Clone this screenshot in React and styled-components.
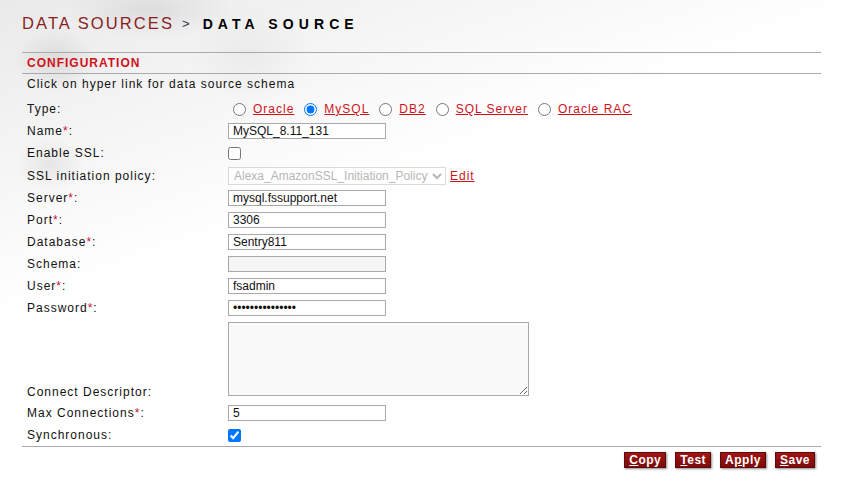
import React from "react";
import styled, { createGlobalStyle } from "styled-components";

const GlobalStyle = createGlobalStyle`
  html, body {
    margin: 0;
    padding: 0;
    background: #ffffff;
  }
  body {
    font-family: "Liberation Sans", Arial, sans-serif;
    color: #111;
  }
`;

// faint grey artwork behind the header
const Page = styled.div`
  width: 847px;
  min-height: 489px;
  box-sizing: border-box;
  padding: 0 26px 0 22px;
  background:
    radial-gradient(ellipse 50px 40px at 50px 165px, rgba(200, 200, 200, 0.35), rgba(255, 255, 255, 0) 70%),
    radial-gradient(ellipse 60px 45px at 55px 60px, rgba(190, 190, 190, 0.4), rgba(255, 255, 255, 0) 70%),
    radial-gradient(ellipse 120px 40px at 150px 10px, rgba(195, 195, 195, 0.4), rgba(255, 255, 255, 0) 70%),
    radial-gradient(ellipse 90px 70px at 250px 55px, rgba(215, 215, 215, 0.3), rgba(255, 255, 255, 0) 70%),
    linear-gradient(160deg, rgba(220, 220, 220, 0.6) 0%, rgba(255, 255, 255, 0) 40%);
`;

const Title = styled.h1`
  margin: 0;
  height: 52px;
  display: flex;
  align-items: center;
  padding-bottom: 5px;
  box-sizing: border-box;
  font-weight: normal;
  white-space: nowrap;
`;

const Crumb = styled.span`
  font-size: 16.5px;
  letter-spacing: 2.1px;
  color: #8a1e1e;
`;

const Sep = styled.span`
  font-size: 13px;
  color: #333;
  margin: 0 13px 0 8px;
`;

const Current = styled.span`
  font-size: 14px;
  font-weight: bold;
  letter-spacing: 5.1px;
  color: #000;
`;

const Section = styled.div`
  border-top: 1px solid #aaa;
  border-bottom: 1px solid #aaa;
  height: 20px;
  display: flex;
  align-items: center;
  padding-left: 5px;
  font-size: 12px;
  font-weight: bold;
  letter-spacing: 1px;
  color: #d0121b;
`;

const Hint = styled.div`
  padding: 1px 0 0 5px;
  height: 24px;
  line-height: 18px;
  box-sizing: border-box;
  font-size: 12px;
  letter-spacing: 1px;
  color: #111;
`;

const Form = styled.div`
  display: grid;
  grid-template-columns: 201px 1fr;
  padding-left: 5px;
  border-bottom: 1px solid #aaa;
`;

const Label = styled.div`
  min-height: 22px;
  display: flex;
  align-items: ${(p) => (p.$bottom ? "flex-end" : "center")};
  padding-bottom: ${(p) => (p.$bottom ? "3px" : "0")};
  box-sizing: border-box;
  font-size: 12px;
  letter-spacing: 1px;
  color: #111;
`;

const Req = styled.span`
  color: #c8102e;
`;

const Field = styled.div`
  min-height: ${(p) => p.$h || "22px"};
  display: flex;
  align-items: center;
  gap: ${(p) => p.$gap || "4px"};
  padding: ${(p) => p.$pad || "0"};
`;

const TextInput = styled.input`
  width: 158px;
  height: 16px;
  box-sizing: border-box;
  margin: 0;
  padding: 0 4px;
  border: 1px solid #a9a9a9;
  background: ${(p) => (p.disabled ? "#f5f5f5" : "#fff")};
  font-family: "Liberation Sans", Arial, sans-serif;
  font-size: 12px;
  color: #111;
  outline: none;
`;

const Area = styled.textarea`
  width: 301px;
  height: 74px;
  box-sizing: border-box;
  margin: 0;
  border: 1px solid #a9a9a9;
  background: #f9f9f9;
  resize: both;
  font-family: "Liberation Sans", Arial, sans-serif;
  font-size: 12px;
`;

const Check = styled.input`
  width: 13px;
  height: 13px;
  margin: 0;
`;

const Radio = styled.input`
  width: 13px;
  height: 13px;
  margin: 0 7px 0 ${(p) => (p.$first ? "5px" : "10px")};
`;

const TypeLink = styled.a`
  font-size: 12px;
  letter-spacing: 1px;
  color: #d0121b;
  text-decoration: underline;
  cursor: pointer;
`;

const Select = styled.select`
  width: 218px;
  height: 18px;
  margin: 0;
  padding: 0 0 0 1px;
  border: 1px solid #ccc;
  background: #fff;
  color: #999;
  font-family: "Liberation Sans", Arial, sans-serif;
  font-size: 12px;
`;

const Actions = styled.div`
  display: flex;
  justify-content: flex-end;
  gap: 9px;
  padding: 5px 6px 0 0;
`;

const Button = styled.button`
  height: 16px;
  padding: 0 4px;
  border: 1px solid #5e0a0a;
  background: linear-gradient(#a11414, #7d0a0a);
  box-shadow: 1px 1px 2px rgba(0, 0, 0, 0.45);
  color: #fff;
  font-family: "Liberation Sans", Arial, sans-serif;
  font-size: 12px;
  font-weight: bold;
  letter-spacing: 0.5px;
  line-height: 14px;
  cursor: pointer;

  u {
    text-decoration: underline;
  }
`;

const types = ["Oracle", "MySQL", "DB2", "SQL Server", "Oracle RAC"];

const Row = ({ label, req, children, bottom, pad, gap, h }) => (
  <>
    <Label $bottom={bottom}>
      {label}
      {req && <Req>*</Req>}:
    </Label>
    <Field $pad={pad} $gap={gap} $h={h}>
      {children}
    </Field>
  </>
);

export default function App() {
  return (
    <Page>
      <GlobalStyle />
      <Title>
        <Crumb>DATA SOURCES</Crumb>
        <Sep>&gt;</Sep>
        <Current>DATA SOURCE</Current>
      </Title>
      <Section>CONFIGURATION</Section>
      <Hint>Click on hyper link for data source schema</Hint>
      <Form>
        <Row label="Type" gap="0">
          {types.map((t, i) => (
            <React.Fragment key={t}>
              <Radio
                type="radio"
                name="type"
                $first={i === 0}
                defaultChecked={t === "MySQL"}
              />
              <TypeLink>{t}</TypeLink>
            </React.Fragment>
          ))}
        </Row>
        <Row label="Name" req>
          <TextInput defaultValue="MySQL_8.11_131" />
        </Row>
        <Row label="Enable SSL">
          <Check type="checkbox" />
        </Row>
        <Row label="SSL initiation policy" h="23px">
          <Select disabled defaultValue="a">
            <option value="a">Alexa_AmazonSSL_Initiation_Policy</option>
          </Select>
          <TypeLink>Edit</TypeLink>
        </Row>
        <Row label="Server" req>
          <TextInput defaultValue="mysql.fssupport.net" />
        </Row>
        <Row label="Port" req>
          <TextInput defaultValue="3306" />
        </Row>
        <Row label="Database" req>
          <TextInput defaultValue="Sentry811" />
        </Row>
        <Row label="Schema">
          <TextInput disabled />
        </Row>
        <Row label="User" req>
          <TextInput defaultValue="fsadmin" />
        </Row>
        <Row label="Password" req>
          <TextInput type="password" defaultValue="fsadminpassword" />
        </Row>
        <Row label="Connect Descriptor" bottom pad="3px 0 6px">
          <Area />
        </Row>
        <Row label="Max Connections" req>
          <TextInput defaultValue="5" />
        </Row>
        <Row label="Synchronous">
          <Check type="checkbox" defaultChecked />
        </Row>
      </Form>
      <Actions>
        <Button>
          <u>C</u>opy
        </Button>
        <Button>
          <u>T</u>est
        </Button>
        <Button>
          A<u>p</u>ply
        </Button>
        <Button>
          <u>S</u>ave
        </Button>
      </Actions>
    </Page>
  );
}
